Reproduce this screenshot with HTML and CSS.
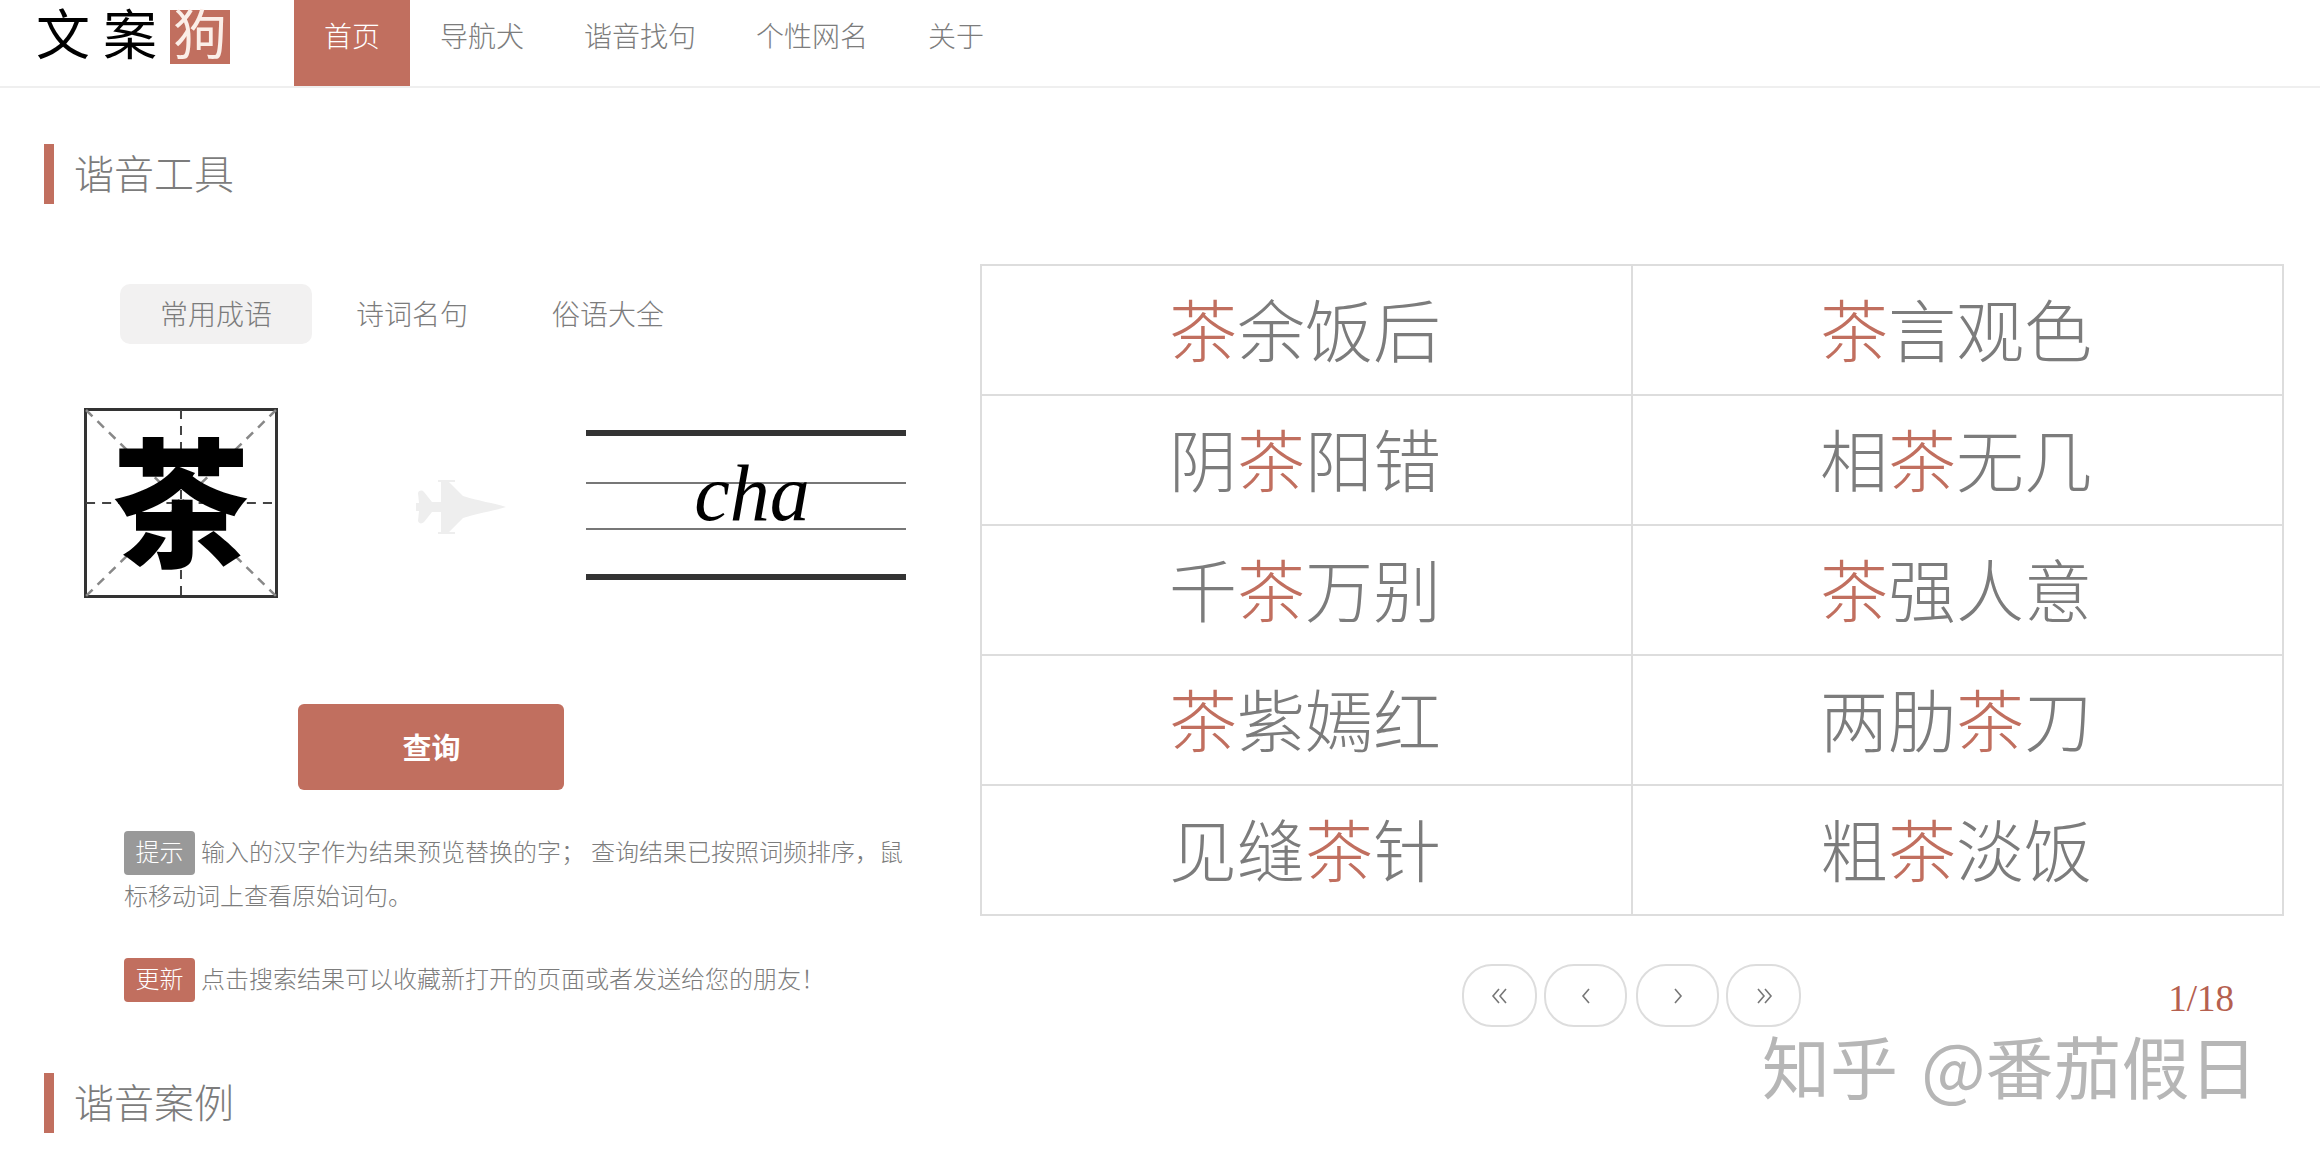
FILE: index.html
```html
<!DOCTYPE html>
<html lang="zh-CN">
<head>
<meta charset="utf-8">
<title>文案狗 谐音工具</title>
<link rel="stylesheet" href="styles.css">
</head>
<body>
<header class="topbar">
  <a class="logo"><span class="logo-ink">文</span><span class="logo-ink">案</span><span class="logo-seal">狗</span></a>
  <nav class="nav">
    <a class="nav-item active">首页</a>
    <a class="nav-item">导航犬</a>
    <a class="nav-item">谐音找句</a>
    <a class="nav-item">个性网名</a>
    <a class="nav-item">关于</a>
  </nav>
</header>
<main class="page">
  <h2 class="section-title">谐音工具</h2>
  <section class="tool">
    <div class="tool-left">
      <div class="tabs">
        <a class="tab active">常用成语</a>
        <a class="tab">诗词名句</a>
        <a class="tab">俗语大全</a>
      </div>
      <div class="stage">
        <div class="tian">
          <svg class="tian-lines" viewBox="0 0 193 190" preserveAspectRatio="none">
            <path class="diag" d="M2 2 L191 188 M191 2 L2 188"/>
            <path class="cross" d="M96.5 2 V188 M2 95 H191"/>
          </svg>
          <span class="tian-char">茶</span>
        </div>
        <svg class="plane" viewBox="0 0 90 54"><path d="M90 27C78 23 62 21 47 16L33 2H39V0H22V2H25V22H16L8 12C6 10 3 10 2 13L3 23H0V31H3L2 41C3 44 6 44 8 42L16 32H25V52H22V54H39V52H33L47 38C62 33 78 31 90 27Z"/></svg>
        <div class="staff"><span class="pinyin">cha</span></div>
      </div>
      <button class="query">查询</button>
      <p class="note first"><span class="badge grey">提示</span> 输入的汉字作为结果预览替换的字； 查询结果已按照词频排序，鼠标移动词上查看原始词句。</p>
      <p class="note second"><span class="badge red">更新</span> 点击搜索结果可以收藏新打开的页面或者发送给您的朋友！</p>
    </div>
    <div class="tool-right">
      <table class="results">
        <tr><td><em>茶</em>余饭后</td><td><em>茶</em>言观色</td></tr>
        <tr><td>阴<em>茶</em>阳错</td><td>相<em>茶</em>无几</td></tr>
        <tr><td>千<em>茶</em>万别</td><td><em>茶</em>强人意</td></tr>
        <tr><td><em>茶</em>紫嫣红</td><td>两肋<em>茶</em>刀</td></tr>
        <tr><td>见缝<em>茶</em>针</td><td>粗<em>茶</em>淡饭</td></tr>
      </table>
      <div class="pager">
        <a class="pg pg-end"><svg class="pg-icon" width="18" height="16" viewBox="0 0 18 16"><path d="M8 1L2 8L8 15M15 1L9 8L15 15"/></svg></a>
        <a class="pg pg-mid"><svg class="pg-icon" width="10" height="16" viewBox="0 0 10 16"><path d="M8 1L2 8L8 15"/></svg></a>
        <a class="pg pg-mid pg-next"><svg class="pg-icon" width="10" height="16" viewBox="0 0 10 16"><path d="M2 1L8 8L2 15"/></svg></a>
        <a class="pg pg-end"><svg class="pg-icon" width="18" height="16" viewBox="0 0 18 16"><path d="M3 1L9 8L3 15M10 1L16 8L10 15"/></svg></a>
        <span class="count">1/18</span>
      </div>
    </div>
  </section>
  <h2 class="section-title lower">谐音案例</h2>
</main>
<div class="watermark">知乎 @番茄假日</div>
</body>
</html>
```
FILE: styles.css
```css
* { box-sizing: border-box; }
html, body { margin: 0; padding: 0; background: #fff; }
body {
  font-family: "Liberation Serif", "Noto Sans CJK SC", serif;
  color: #7c7c7c;
  position: relative;
  height: 1160px;
  overflow: hidden;
}
.topbar {
  height: 88px;
  border-bottom: 2px solid #efefef;
  display: flex;
  align-items: flex-start;
}
.logo {
  display: flex;
  width: 294px;
  padding: 10px 0 0 36px;
  font-size: 54px;
  line-height: 54px;
  color: #000;
}
.logo-ink { width: 67px; }
.logo-seal {
  width: 60px;
  height: 54px;
  background: #c16f5f;
  color: #fbeee8;
  text-align: center;
}
.nav { display: flex; }
.nav-item {
  height: 86px;
  padding: 0 30px;
  font-size: 28px;
  line-height: 76px;
  color: #7c7c7c;
  font-weight: 300;
}
.nav-item.active { background: #c16f5f; color: #fff; }
.section-title {
  margin: 56px 0 0 44px;
  height: 60px;
  border-left: 10px solid #c16f5f;
  padding-left: 20px;
  font-size: 40px;
  line-height: 64px;
  font-weight: 300;
  color: #7c7c7c;
}
.section-title.lower { margin-top: 0; }
.tool {
  display: grid;
  grid-template-columns: 980px 1304px;
  margin-top: 60px;
}
.tool-left { padding-top: 20px; }
.tabs { display: flex; gap: 4px; margin-left: 120px; }
.tab {
  width: 192px;
  height: 60px;
  border-radius: 10px;
  font-size: 28px;
  line-height: 64px;
  text-align: center;
  font-weight: 300;
}
.tab.active { background: #f2f1f1; }
.stage { display: flex; align-items: flex-start; margin: 64px 0 0 84px; }
.tian {
  position: relative;
  width: 194px;
  height: 190px;
  border: 3px solid #333;
  display: flex;
  align-items: center;
  justify-content: center;
}
.tian-lines { position: absolute; inset: -3px; width: 194px; height: 190px; }
.tian-lines path { fill: none; stroke-dasharray: 9 7; }
.tian-lines .diag { stroke: #888; stroke-width: 2.5; }
.tian-lines .cross { stroke: #444; stroke-width: 2; }
.tian-char {
  position: relative;
  top: 6px;
  font-size: 138px;
  line-height: 138px;
  font-weight: 900;
  color: #000;
}
.plane { width: 90px; height: 54px; margin: 72px 0 0 138px; fill: #eeeeee; flex: none; }
.staff {
  position: relative;
  width: 320px;
  height: 150px;
  margin: 22px 0 0 80px;
  border-top: 6px solid #333;
  border-bottom: 6px solid #333;
  text-align: center;
}
.staff::before, .staff::after {
  content: "";
  position: absolute;
  left: 0;
  right: 0;
  height: 2px;
  background: #777;
}
.staff::before { top: 46px; }
.staff::after { top: 92px; }
.pinyin {
  position: relative;
  z-index: 1;
  display: block;
  padding-left: 12px;
  margin-top: 12px;
  font-family: "Liberation Serif", serif;
  font-style: italic;
  font-size: 80px;
  line-height: 90px;
  color: #000;
}
.query {
  display: block;
  width: 266px;
  height: 86px;
  margin: 106px 0 0 298px;
  padding: 0 0 2px 1px;
  border: 0;
  border-radius: 6px;
  background: #c16f5f;
  color: #fff;
  font-family: "Noto Sans CJK SC", sans-serif;
  font-size: 29px;
  font-weight: 700;
}
.note {
  width: 790px;
  margin: 0 0 0 124px;
  font-size: 24px;
  line-height: 44px;
  color: #7c7c7c;
  font-weight: 300;
}
.note.first { margin-top: 41px; }
.note.second { margin-top: 39px; margin-bottom: 71px; }
.badge {
  display: inline-block;
  vertical-align: top;
  height: 44px;
  padding: 0 11.5px;
  border-radius: 4px;
  color: #fff;
}
.badge.grey { background: #999; }
.badge.red { background: #c16f5f; }
.results {
  width: 1304px;
  height: 652px;
  border-collapse: collapse;
  table-layout: fixed;
}
.results td {
  height: 130px;
  padding: 8px 3px 0 0;
  border: 2px solid #ddd;
  text-align: center;
  font-size: 68px;
  line-height: 120px;
  color: #7c7c7c;
  font-weight: 300;
}
.results em { font-style: normal; color: #c16f5f; }
.pager { display: flex; align-items: flex-start; margin: 48px 0 0 482px; }
.pg {
  height: 63px;
  border: 2px solid #ddd;
  border-radius: 30px;
  display: flex;
  align-items: center;
  justify-content: center;
  margin-right: 7px;
}
.pg-end { width: 75px; }
.pg-mid { width: 83px; }
.pg-next { margin-left: 2px; }
.pg-icon path { fill: none; stroke: #777; stroke-width: 1.6; }
.count {
  margin-left: auto;
  margin-right: 50px;
  padding-top: 14px;
  font-size: 37px;
  line-height: 42px;
  color: #b5604f;
}
.watermark {
  position: absolute;
  left: 1762px;
  top: 1030px;
  font-family: "Noto Sans CJK SC", sans-serif;
  font-size: 68px;
  line-height: 70px;
  color: #b6b6b6;
  white-space: nowrap;
  word-spacing: 8px;
}
```
